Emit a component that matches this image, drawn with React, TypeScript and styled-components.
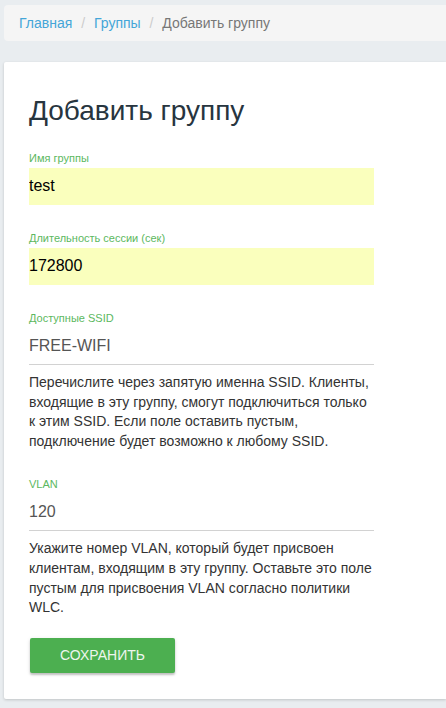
import React from "react";
import styled, { createGlobalStyle } from "styled-components";

const GlobalStyle = createGlobalStyle`
  html, body {
    margin: 0;
    padding: 0;
    background: #e9edf0;
    overflow: hidden;
  }
  body {
    font-family: "Liberation Sans", Arial, sans-serif;
    font-size: 14px;
    color: #333;
  }
`;

const StyledPage = styled.div`
  width: 100%;
  height: 708px;
  padding: 5px 0 0 4px;
  box-sizing: border-box;
`;

const StyledBreadcrumb = styled.ol`
  list-style: none;
  margin: 0 0 21px;
  padding: 8px 15px;
  background: #f5f5f5;
  border-radius: 4px 0 0 4px;
  line-height: 20px;
  font-size: 14px;

  & > li + li:before {
    content: "/\\00a0";
    padding: 0 5px;
    color: #ccc;
  }
`;

const StyledCrumb = styled.li<{ $active?: boolean }>`
  display: inline-block;
  color: ${(p) => (p.$active ? "#777" : "#44a6d8")};
`;

const StyledCard = styled.div`
  background: #fff;
  border-radius: 2px 0 0 2px;
  box-shadow: 0 1px 3px rgba(0, 0, 0, 0.18);
  padding: 32px 25px 26px;
`;

const StyledTitle = styled.h3`
  margin: 0 0 24px;
  font-size: 28px;
  line-height: 33px;
  font-weight: 400;
  color: #27353f;
`;

const StyledForm = styled.form`
  width: 345px;
  display: flex;
  flex-direction: column;
`;

const StyledGroup = styled.div`
  display: flex;
  flex-direction: column;
  margin-bottom: 26px;
`;

const StyledLabel = styled.label`
  font-size: 11px;
  line-height: 15px;
  margin-bottom: 2px;
  color: #5cb860;
`;

const StyledInput = styled.input<{ $autofill?: boolean }>`
  height: 37px;
  box-sizing: border-box;
  border: 0;
  border-bottom: 1px solid ${(p) => (p.$autofill ? "#faffbd" : "#d2d2d2")};
  background: ${(p) => (p.$autofill ? "#faffbd" : "transparent")};
  padding: 0;
  margin: 0;
  font-family: "Liberation Sans", Arial, sans-serif;
  font-size: 16px;
  color: ${(p) => (p.$autofill ? "#000" : "#555")};
  outline: none;
`;

const StyledHelp = styled.p`
  margin: 8px 0 0;
  font-size: 14px;
  line-height: 19.6px;
  color: #333;
`;

const StyledButton = styled.button`
  margin: -6px 0 0 1px;
  align-self: flex-start;
  width: 145px;
  height: 35px;
  border: 0;
  border-radius: 2px;
  background: #4caf50;
  color: #eef6ee;
  font-family: "Liberation Sans", Arial, sans-serif;
  font-size: 14px;
  text-transform: uppercase;
  box-shadow: 0 2px 2px rgba(0, 0, 0, 0.2), 0 1px 4px rgba(0, 0, 0, 0.1);
  cursor: pointer;
`;

export default function App() {
  return (
    <StyledPage>
      <GlobalStyle />
      <StyledBreadcrumb>
        <StyledCrumb>Главная</StyledCrumb>{" "}
        <StyledCrumb>Группы</StyledCrumb>{" "}
        <StyledCrumb $active>Добавить группу</StyledCrumb>
      </StyledBreadcrumb>
      <StyledCard>
        <StyledTitle>Добавить группу</StyledTitle>
        <StyledForm onSubmit={(e) => e.preventDefault()}>
          <StyledGroup>
            <StyledLabel>Имя группы</StyledLabel>
            <StyledInput $autofill defaultValue="test" />
          </StyledGroup>
          <StyledGroup>
            <StyledLabel>Длительность сессии (сек)</StyledLabel>
            <StyledInput $autofill defaultValue="172800" />
          </StyledGroup>
          <StyledGroup>
            <StyledLabel>Доступные SSID</StyledLabel>
            <StyledInput defaultValue="FREE-WIFI" />
            <StyledHelp>
              Перечислите через запятую именна SSID. Клиенты, входящие в эту
              группу, смогут подключиться только к этим SSID. Если поле
              оставить пустым, подключение будет возможно к любому SSID.
            </StyledHelp>
          </StyledGroup>
          <StyledGroup>
            <StyledLabel>VLAN</StyledLabel>
            <StyledInput defaultValue="120" />
            <StyledHelp>
              Укажите номер VLAN, который будет присвоен клиентам, входящим в
              эту группу. Оставьте это поле пустым для присвоения VLAN согласно
              политики WLC.
            </StyledHelp>
          </StyledGroup>
          <StyledButton type="submit">Сохранить</StyledButton>
        </StyledForm>
      </StyledCard>
    </StyledPage>
  );
}
